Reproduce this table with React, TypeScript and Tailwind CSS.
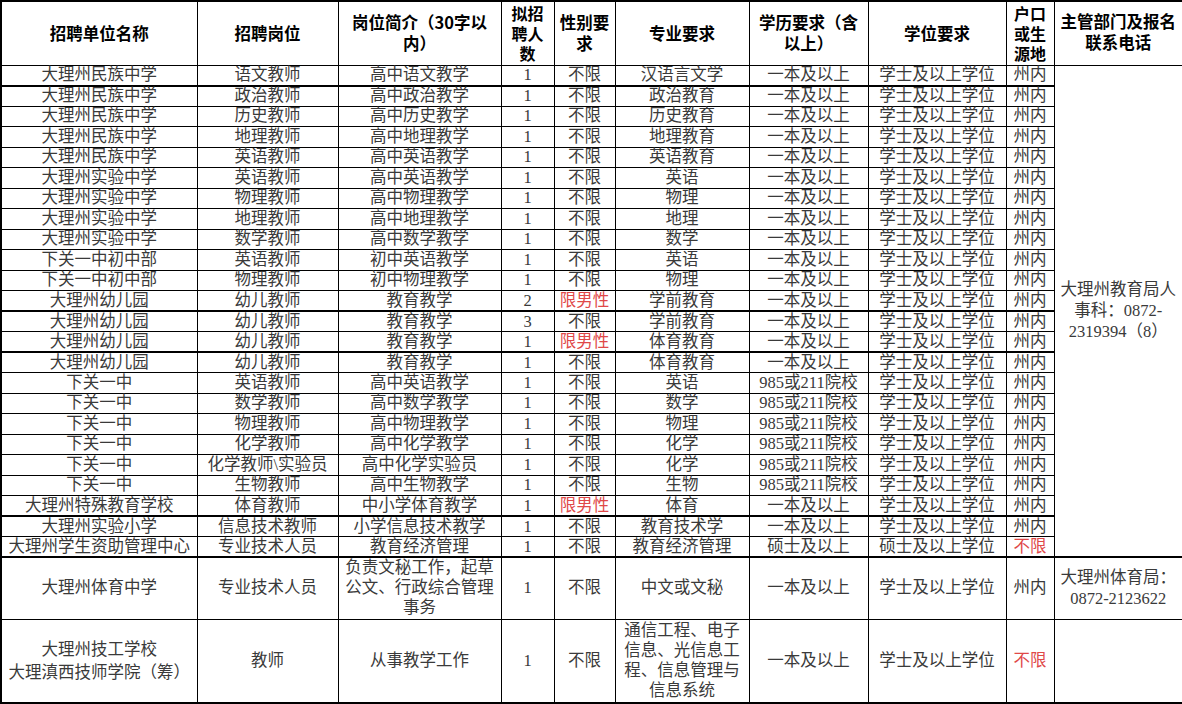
import React from "react";

type Row = {
  unit: React.ReactNode;
  post: string;
  intro: React.ReactNode;
  num: string;
  sex: string;
  major: React.ReactNode;
  edu: string;
  degree: string;
  origin: string;
  thick?: boolean;
};

const std = (
  unit: string,
  post: string,
  intro: string,
  num: string,
  sex: string,
  major: string,
  edu = "一本及以上",
  thick = false
): Row => ({ unit, post, intro, num, sex, major, edu, degree: "学士及以上学位", origin: "州内", thick });

const rows: Row[] = [
  std("大理州民族中学", "语文教师", "高中语文教学", "1", "不限", "汉语言文学", "一本及以上", true),
  std("大理州民族中学", "政治教师", "高中政治教学", "1", "不限", "政治教育"),
  std("大理州民族中学", "历史教师", "高中历史教学", "1", "不限", "历史教育"),
  std("大理州民族中学", "地理教师", "高中地理教学", "1", "不限", "地理教育"),
  std("大理州民族中学", "英语教师", "高中英语教学", "1", "不限", "英语教育"),
  std("大理州实验中学", "英语教师", "高中英语教学", "1", "不限", "英语"),
  std("大理州实验中学", "物理教师", "高中物理教学", "1", "不限", "物理"),
  std("大理州实验中学", "地理教师", "高中地理教学", "1", "不限", "地理"),
  std("大理州实验中学", "数学教师", "高中数学教学", "1", "不限", "数学"),
  std("下关一中初中部", "英语教师", "初中英语教学", "1", "不限", "英语"),
  std("下关一中初中部", "物理教师", "初中物理教学", "1", "不限", "物理"),
  std("大理州幼儿园", "幼儿教师", "教育教学", "2", "限男性", "学前教育", "一本及以上", true),
  std("大理州幼儿园", "幼儿教师", "教育教学", "3", "不限", "学前教育"),
  std("大理州幼儿园", "幼儿教师", "教育教学", "1", "限男性", "体育教育", "一本及以上", true),
  std("大理州幼儿园", "幼儿教师", "教育教学", "1", "不限", "体育教育"),
  std("下关一中", "英语教师", "高中英语教学", "1", "不限", "英语", "985或211院校"),
  std("下关一中", "数学教师", "高中数学教学", "1", "不限", "数学", "985或211院校"),
  std("下关一中", "物理教师", "高中物理教学", "1", "不限", "物理", "985或211院校"),
  std("下关一中", "化学教师", "高中化学教学", "1", "不限", "化学", "985或211院校"),
  std("下关一中", "化学教师\\实验员", "高中化学实验员", "1", "不限", "化学", "985或211院校"),
  std("下关一中", "生物教师", "高中生物教学", "1", "不限", "生物", "985或211院校"),
  std("大理州特殊教育学校", "体育教师", "中小学体育教学", "1", "限男性", "体育", "一本及以上", true),
  std("大理州实验小学", "信息技术教师", "小学信息技术教学", "1", "不限", "教育技术学"),
  {
    unit: "大理州学生资助管理中心",
    post: "专业技术人员",
    intro: "教育经济管理",
    num: "1",
    sex: "不限",
    major: "教育经济管理",
    edu: "硕士及以上",
    degree: "硕士及以上学位",
    origin: "不限",
    thick: true,
  },
];

const red = "text-[#e04848]";
const td = "border border-black p-0 text-center align-middle whitespace-nowrap leading-[18px]";
const th = "border border-black p-0 text-center align-middle font-bold text-black leading-[21px]";

export default function App() {
  return (
    <div
      className="w-[1182px] h-[704px] overflow-hidden bg-white"
      style={{ fontFamily: '"Liberation Serif", "Noto Sans CJK SC", serif' }}
    >
      <table className="w-[1182px] table-fixed border-collapse border-2 border-black text-[16.5px] text-[#3a3a3a]">
        <colgroup>
          <col className="w-[196px]" />
          <col className="w-[141px]" />
          <col className="w-[163px]" />
          <col className="w-[53px]" />
          <col className="w-[61px]" />
          <col className="w-[134px]" />
          <col className="w-[119px]" />
          <col className="w-[138px]" />
          <col className="w-[48px]" />
          <col className="w-[129px]" />
        </colgroup>
        <thead style={{ fontFamily: '"Noto Sans CJK SC", sans-serif' }}>
          <tr className="h-[64px]">
            <th className={th}>招聘单位名称</th>
            <th className={th}>招聘岗位</th>
            <th className={th}>
              岗位简介（30字以
              <br />
              内）
            </th>
            <th className={th + " !leading-[20px] text-[16px]"}>
              拟招
              <br />
              聘人
              <br />
              数
            </th>
            <th className={th}>
              性别要
              <br />
              求
            </th>
            <th className={th}>专业要求</th>
            <th className={th}>
              学历要求（含
              <br />
              以上）
            </th>
            <th className={th}>学位要求</th>
            <th className={th + " !leading-[20px] text-[16px]"}>
              户口
              <br />
              或生
              <br />
              源地
            </th>
            <th className={th + " align-top pt-[9px]"}>
              主管部门及报名
              <br />
              联系电话
            </th>
          </tr>
        </thead>
        <tbody>
          {rows.map((r, i) => {
            const b = r.thick ? " border-b-2" : "";
            return (
              <tr key={i} className="h-[20.5px]">
                <td className={td + b}>{r.unit}</td>
                <td className={td + b}>{r.post}</td>
                <td className={td + b}>{r.intro}</td>
                <td className={td + b}>{r.num}</td>
                <td className={td + b + (r.sex === "限男性" ? " " + red : "")}>{r.sex}</td>
                <td className={td + b}>{r.major}</td>
                <td className={td + b}>{r.edu}</td>
                <td className={td + b}>{r.degree}</td>
                <td className={td + b + (r.origin === "不限" ? " " + red : "")}>{r.origin}</td>
                {i === 0 && (
                  <td rowSpan={24} className="border border-black border-b-2 p-0 text-center align-middle leading-[21px]">
                    大理州教育局人
                    <br />
                    事科：0872-
                    <br />
                    2319394（8）
                  </td>
                )}
              </tr>
            );
          })}
          <tr className="h-[62px]">
            <td className={td}>大理州体育中学</td>
            <td className={td}>专业技术人员</td>
            <td className={td + " !leading-[20px]"}>
              负责文秘工作，起草
              <br />
              公文、行政综合管理
              <br />
              事务
            </td>
            <td className={td}>1</td>
            <td className={td}>不限</td>
            <td className={td}>中文或文秘</td>
            <td className={td}>一本及以上</td>
            <td className={td}>学士及以上学位</td>
            <td className={td}>州内</td>
            <td className={td + " !leading-[21px]"}>
              大理州体育局：
              <br />
              0872-2123622
            </td>
          </tr>
          <tr className="h-[84px]">
            <td className={td + " !leading-[23px]"}>
              大理州技工学校
              <br />
              大理滇西技师学院（筹）
            </td>
            <td className={td}>教师</td>
            <td className={td}>从事教学工作</td>
            <td className={td}>1</td>
            <td className={td}>不限</td>
            <td className={td + " !leading-[20px]"}>
              通信工程、电子
              <br />
              信息、光信息工
              <br />
              程、信息管理与
              <br />
              信息系统
            </td>
            <td className={td}>一本及以上</td>
            <td className={td}>学士及以上学位</td>
            <td className={td + " " + red}>不限</td>
            <td className={td}></td>
          </tr>
        </tbody>
      </table>
    </div>
  );
}
